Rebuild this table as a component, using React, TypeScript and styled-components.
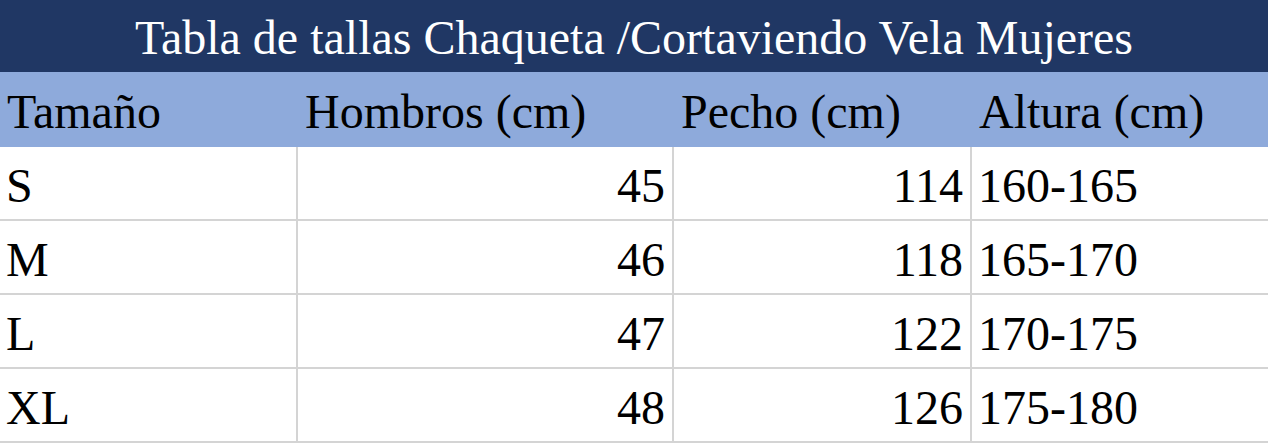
import styled, { createGlobalStyle } from "styled-components";

const GlobalStyle = createGlobalStyle`
  html, body {
    margin: 0;
    padding: 0;
    background: #ffffff;
  }
`;

const Table = styled.div`
  width: 1268px;
  display: grid;
  grid-template-columns: 298px 376px 298px 296px;
  font-family: "Liberation Serif", "Times New Roman", serif;
  color: #000000;
`;

const Title = styled.div`
  grid-column: 1 / -1;
  height: 72px;
  background: #203764;
  color: #ffffff;
  font-size: 48px;
  display: flex;
  align-items: center;
  justify-content: center;
  padding-top: 2px;
  box-sizing: border-box;
  white-space: nowrap;
`;

const HeadCell = styled.div`
  height: 75px;
  background: #8eaadb;
  font-size: 48px;
  display: flex;
  align-items: center;
  padding: 4px 8px 0 7px;
  box-sizing: border-box;
  white-space: nowrap;
`;

const Cell = styled.div<{ $align?: "left" | "right"; $last?: boolean }>`
  height: 74px;
  font-size: 48px;
  display: flex;
  align-items: center;
  justify-content: ${(p) => (p.$align === "right" ? "flex-end" : "flex-start")};
  padding: 4px 7px 0 6px;
  box-sizing: border-box;
  border-bottom: 2px solid #d4d4d4;
  border-right: ${(p) => (p.$last ? "none" : "2px solid #d4d4d4")};
  white-space: nowrap;
`;

const rows = [
  { size: "S", shoulders: 45, chest: 114, height: "160-165" },
  { size: "M", shoulders: 46, chest: 118, height: "165-170" },
  { size: "L", shoulders: 47, chest: 122, height: "170-175" },
  { size: "XL", shoulders: 48, chest: 126, height: "175-180" },
];

const App = () => {
  return (
    <>
      <GlobalStyle />
      <Table>
        <Title>Tabla de tallas Chaqueta /Cortaviendo Vela Mujeres</Title>
        <HeadCell>Tamaño</HeadCell>
        <HeadCell>Hombros (cm)</HeadCell>
        <HeadCell>Pecho (cm)</HeadCell>
        <HeadCell>Altura (cm)</HeadCell>
        {rows.map((row) => (
          <>
            <Cell key={row.size + "-s"}>{row.size}</Cell>
            <Cell key={row.size + "-sh"} $align="right">
              {row.shoulders}
            </Cell>
            <Cell key={row.size + "-c"} $align="right">
              {row.chest}
            </Cell>
            <Cell key={row.size + "-h"} $last>
              {row.height}
            </Cell>
          </>
        ))}
      </Table>
    </>
  );
};

export default App;
